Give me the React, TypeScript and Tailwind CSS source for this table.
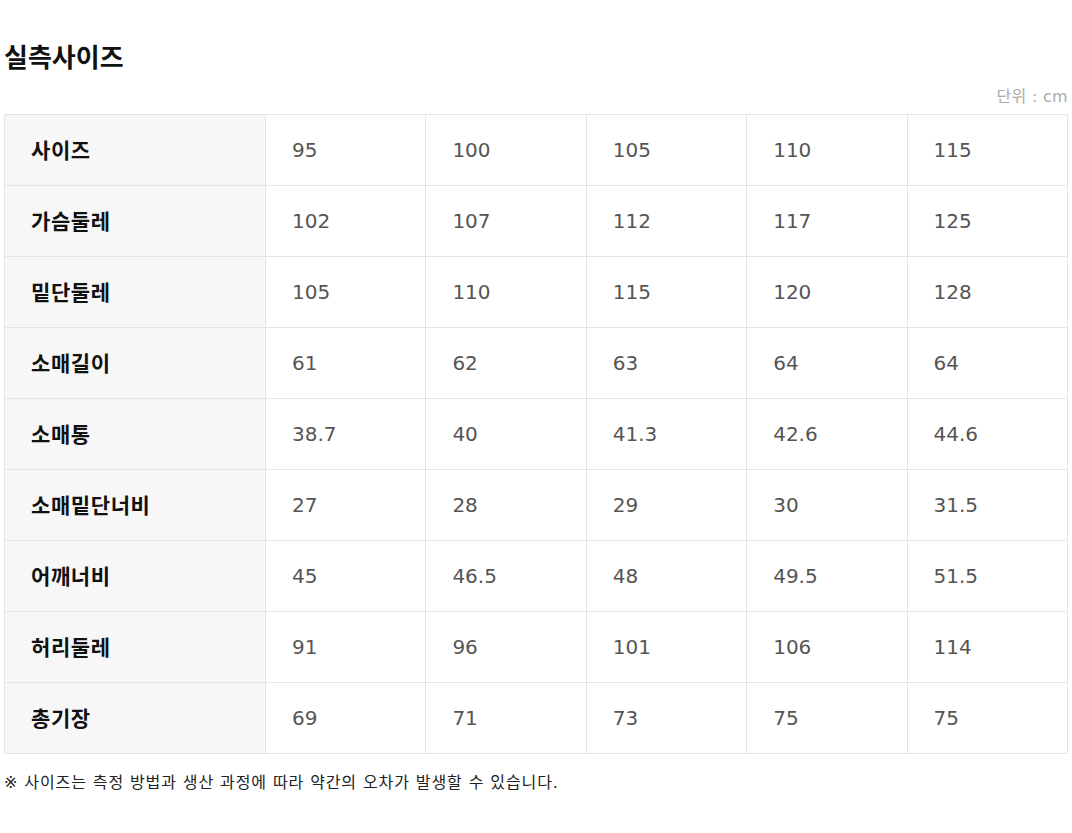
const rows: [string, string[]][] = [
  ["사이즈", ["95", "100", "105", "110", "115"]],
  ["가슴둘레", ["102", "107", "112", "117", "125"]],
  ["밑단둘레", ["105", "110", "115", "120", "128"]],
  ["소매길이", ["61", "62", "63", "64", "64"]],
  ["소매통", ["38.7", "40", "41.3", "42.6", "44.6"]],
  ["소매밑단너비", ["27", "28", "29", "30", "31.5"]],
  ["어깨너비", ["45", "46.5", "48", "49.5", "51.5"]],
  ["허리둘레", ["91", "96", "101", "106", "114"]],
  ["총기장", ["69", "71", "73", "75", "75"]],
];

export default function App() {
  return (
    <div className="w-[1072px] bg-white px-[4px] pt-[41px] font-['DejaVu_Sans','Noto_Sans_CJK_KR',sans-serif]">
      {/* Title */}
      <h2 className="text-[26px] leading-[34px] font-bold text-[#111]">실측사이즈</h2>

      {/* Unit */}
      <div className="mt-[12px] text-right text-[16px] leading-[20px] text-[#aaa] tracking-[0.3px]">단위 : cm</div>

      {/* Size table */}
      <table className="mt-[7px] w-full border-collapse table-fixed">
        <colgroup>
          <col className="w-[261px]" />
          <col />
          <col />
          <col />
          <col />
          <col />
        </colgroup>
        <tbody>
          {rows.map(([label, values]) => (
            <tr key={label} className="h-[71px]">
              <th className="border border-[#e5e5e5] bg-[#f7f7f7] pl-[26px] pt-[3px] text-left text-[21px] font-bold text-[#111] tracking-[0.6px]">
                {label}
              </th>
              {values.map((v, i) => (
                <td key={i} className="border border-[#e5e5e5] pl-[26px] text-[20px] text-[#555]">
                  {v}
                </td>
              ))}
            </tr>
          ))}
        </tbody>
      </table>

      {/* Note */}
      <p className="mt-[18px] text-[16px] leading-[22px] text-[#222] tracking-[0.9px]">
        ※ 사이즈는 측정 방법과 생산 과정에 따라 약간의 오차가 발생할 수 있습니다.
      </p>
    </div>
  );
}
